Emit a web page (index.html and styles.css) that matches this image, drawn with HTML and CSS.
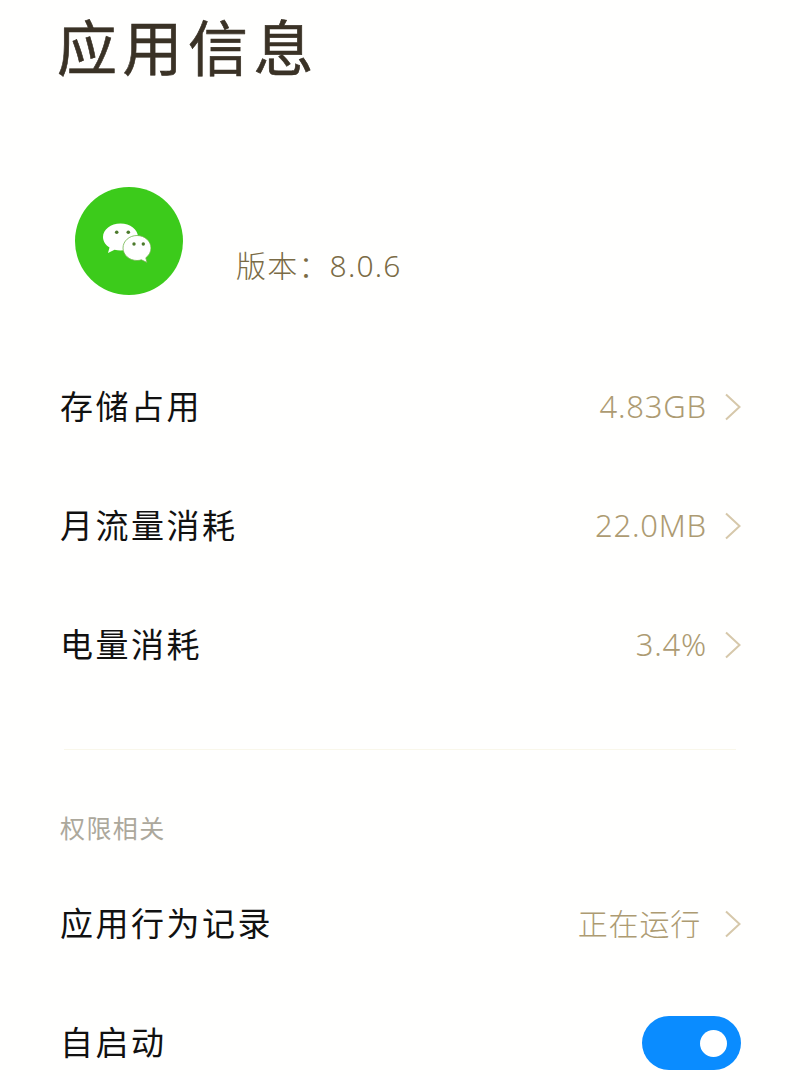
FILE: index.html
```html
<!DOCTYPE html>
<html lang="zh-CN">
<head>
    <meta charset="UTF-8">
    <meta name="viewport" content="width=device-width, initial-scale=1.0">
    <title>应用信息</title>
    <link rel="stylesheet" href="styles.css">
</head>
<body>
    <h1 class="title">应用信息</h1>

    <div class="app-info">
        <div class="app-icon">
            <svg class="app-glyph" width="48" height="40" viewBox="0 0 48 40">
                <path fill="#fff" d="M17.500 .5C7.800 .5 0 6.500 0 14c0 4.300 2.600 8 6.500 10.500L5 30l6.500-3.300c2 .5 4 .8 6 .8 9.700 0 17.500-6 17.500-13.500S27.200 .5 17.500 .5z"/>
                <path fill="#fff" stroke="#6fb54a" stroke-width=".8" d="M34 12.500c-7.700 0-14 5.600-14 12.500s6.300 12.500 14 12.500c1.500 0 3-.2 4.400-.7l5.600 2.700-1.200-4.700c3.200-2.300 5.200-6 5.200-9.800 0-6.900-6.300-12.500-14-12.500z"/>
                <circle cx="13.700" cy="9.300" r="1.800" fill="#4c7a2c"/>
                <circle cx="25.300" cy="9.300" r="1.800" fill="#4c7a2c"/>
                <circle cx="31" cy="21" r="1.700" fill="#4c7a2c"/>
                <circle cx="40.300" cy="21" r="1.700" fill="#4c7a2c"/>
            </svg>
        </div>
        <span class="version">版本：8.0.6</span>
    </div>

    <div class="list">
        <div class="row">
            <span class="row-name">存储占用</span>
            <span class="row-value">4.83GB</span>
            <svg class="chevron" width="17" height="28" viewBox="0 0 17 28"><path d="M2 1.500l13.500 12.500L2 26.500"/></svg>
        </div>
        <div class="row">
            <span class="row-name">月流量消耗</span>
            <span class="row-value">22.0MB</span>
            <svg class="chevron" width="17" height="28" viewBox="0 0 17 28"><path d="M2 1.500l13.500 12.500L2 26.500"/></svg>
        </div>
        <div class="row">
            <span class="row-name">电量消耗</span>
            <span class="row-value">3.4%</span>
            <svg class="chevron" width="17" height="28" viewBox="0 0 17 28"><path d="M2 1.500l13.500 12.500L2 26.500"/></svg>
        </div>
    </div>

    <div class="divider"></div>

    <div class="section-label">权限相关</div>

    <div class="list">
        <div class="row">
            <span class="row-name">应用行为记录</span>
            <span class="row-value row-value-cjk">正在运行</span>
            <svg class="chevron" width="17" height="28" viewBox="0 0 17 28"><path d="M2 1.500l13.500 12.500L2 26.500"/></svg>
        </div>
        <div class="row">
            <span class="row-name">自启动</span>
            <div class="toggle"><div class="knob"></div></div>
        </div>
    </div>
</body>
</html>
```

FILE: styles.css
```css
html, body {
    height: 1076px;
    overflow: hidden;
}

body {
    margin: 0;
    background: #fffffe;
    font-family: "Noto Sans CJK SC", "Noto Sans", sans-serif;
}

.title {
    margin: 0;
    padding-left: 57px;
    height: 94px;
    line-height: 90px;
    font-size: 60px;
    font-weight: 400;
    letter-spacing: 5.500px;
    color: #3a3226;
    -webkit-text-stroke: .6px #3a3226;
}

.app-info {
    display: flex;
    align-items: flex-start;
    height: 253.500px;
    padding: 93px 0 0 75px;
    box-sizing: border-box;
}

.app-icon {
    width: 108px;
    height: 108px;
    border-radius: 50%;
    background: #3ccb1b;
    display: flex;
    align-items: center;
    justify-content: center;
    flex-shrink: 0;
}

.app-glyph {
    margin: 4px 4px 0 0;
}

.version {
    margin: 57px 0 0 53px;
    font-family: "Noto Sans", "Noto Sans CJK SC", sans-serif;
    font-size: 30px;
    font-weight: 300;
    letter-spacing: 1.200px;
    line-height: 44px;
    color: #7a6b45;
}

.row {
    display: flex;
    align-items: center;
    height: 119px;
    padding: 0 59px 0 60px;
}

.row-name {
    flex: 1;
    margin-bottom: 5px;
    font-size: 33px;
    letter-spacing: 2.500px;
    color: #111;
}

.row-value {
    margin-bottom: 3px;
    font-family: "Noto Sans", "Noto Sans CJK SC", sans-serif;
    font-size: 31px;
    font-weight: 300;
    letter-spacing: .8px;
    color: #ad9b72;
}

.row-value-cjk {
    margin: 0 6px 5px 0;
    font-size: 30px;
}

.chevron {
    margin-left: 17px;
    fill: none;
    stroke: #d6c8aa;
    stroke-width: 2;
    flex-shrink: 0;
}

.divider {
    height: 1px;
    margin: 44px 64px 0;
    background: #f9f7ea;
}

.section-label {
    margin: 60px 0 0 60px;
    height: 55px;
    font-size: 25px;
    letter-spacing: 1.400px;
    line-height: 34px;
    color: #aca89c;
}

.toggle {
    width: 99px;
    height: 54px;
    border-radius: 27px;
    background: #0a8cff;
    display: flex;
    align-items: center;
    justify-content: flex-end;
    padding-right: 14px;
    box-sizing: border-box;
}

.knob {
    width: 27px;
    height: 27px;
    border-radius: 50%;
    background: #fff;
}
```
